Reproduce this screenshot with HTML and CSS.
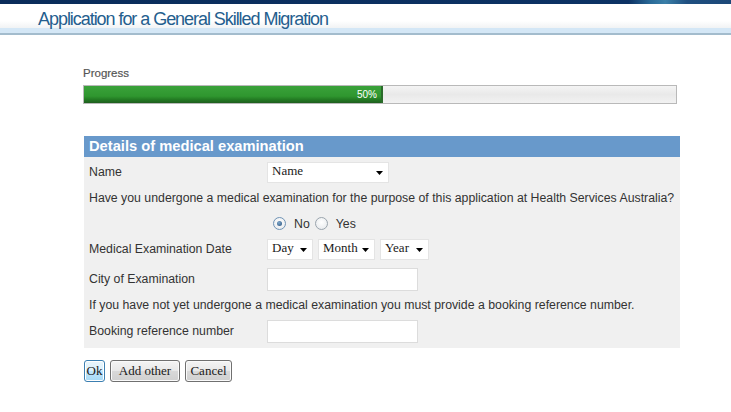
FILE: index.html
```html
<!DOCTYPE html>
<html>
<head>
<meta charset="utf-8">
<link rel="stylesheet" href="styles.css">
</head>
<body>
<div class="topbar"></div>
<div class="header">
  <h1 class="title">Application for a General Skilled Migration</h1>
</div>
<div class="band"></div>

<div class="main">
  <div class="progress-label">Progress</div>
  <div class="progress">
    <div class="progress-fill" style="width: 50.5%"><span class="progress-text">50%</span></div>
  </div>

  <div class="panel">
    <div class="panel-head">Details of medical examination</div>
    <div class="panel-body">
      <div class="row r26">
        <div class="label">Name</div>
        <div class="control">
          <div class="select w-name"><span>Name</span><svg class="arrow" width="7" height="4" viewBox="0 0 7 4"><path d="M0 0H7L3.5 4Z" fill="#000"/></svg></div>
        </div>
      </div>
      <div class="row r26">
        <div class="text">Have you undergone a medical examination for the purpose of this application at Health Services Australia?</div>
      </div>
      <div class="row r25">
        <div class="label"></div>
        <div class="control radios">
          <span class="radio checked"><span class="dot"></span></span><span class="rlabel">No</span>
          <span class="radio"></span><span class="rlabel">Yes</span>
        </div>
      </div>
      <div class="row r26">
        <div class="label">Medical Examination Date</div>
        <div class="control dates">
          <div class="select w-day"><span>Day</span><svg class="arrow" width="7" height="4" viewBox="0 0 7 4"><path d="M0 0H7L3.5 4Z" fill="#000"/></svg></div>
          <div class="select w-month"><span>Month</span><svg class="arrow" width="7" height="4" viewBox="0 0 7 4"><path d="M0 0H7L3.5 4Z" fill="#000"/></svg></div>
          <div class="select w-year"><span>Year</span><svg class="arrow" width="7" height="4" viewBox="0 0 7 4"><path d="M0 0H7L3.5 4Z" fill="#000"/></svg></div>
        </div>
      </div>
      <div class="row r34">
        <div class="label">City of Examination</div>
        <div class="control"><div class="input"></div></div>
      </div>
      <div class="row r18">
        <div class="text">If you have not yet undergone a medical examination you must provide a booking reference number.</div>
      </div>
      <div class="row r34">
        <div class="label">Booking reference number</div>
        <div class="control"><div class="input"></div></div>
      </div>
    </div>
  </div>

  <div class="buttons">
    <button class="btn btn-ok">Ok</button>
    <button class="btn btn-add">Add other</button>
    <button class="btn btn-cancel">Cancel</button>
  </div>
</div>
</body>
</html>
```

FILE: styles.css
```css
html, body {
  margin: 0;
  padding: 0;
  background: #ffffff;
  font-family: "Liberation Sans", Arial, sans-serif;
}

.topbar {
  height: 4px;
  background: linear-gradient(to right, #0a2c5a 0%, #0c3264 86%, #2a6a98 89%, #3a7fa8 91%, #1f4f80 94%, #1c4878 100%);
}

.header {
  height: 24px;
  background: linear-gradient(to bottom, #ffffff 0%, #ffffff 70%, #f1f3f4 100%);
  padding-left: 38px;
}

.title {
  margin: 0;
  font-family: "Liberation Sans", Arial, sans-serif;
  font-weight: normal;
  font-size: 18px;
  line-height: 24px;
  letter-spacing: -1.05px;
  color: #245e8e;
  padding-top: 3px;
  height: 21px;
  white-space: nowrap;
}

.band {
  height: 5px;
  background: #d4e7f6;
  border-bottom: 2px solid #a3bccd;
}

.main {
  padding-left: 83px;
  padding-top: 32px;
  width: 597px;
}

.progress-label {
  font-size: 11.5px;
  color: #555;
  line-height: 13px;
  height: 13px;
  margin-bottom: 5px;
  -webkit-text-stroke: 0.2px #555;
}

.progress {
  width: 592px;
  height: 17px;
  border: 1px solid #b9b9b9;
  background: linear-gradient(to bottom, #f4f4f4 0%, #e9e9e9 50%, #f2f2f2 100%);
  position: relative;
}

.progress-fill {
  height: 17px;
  background: linear-gradient(to bottom, #3aa23a 0%, #2f962f 60%, #237a23 80%, #1f5e1f 100%);
  border-right: 2px solid #2a6a2a;
  box-sizing: border-box;
  display: flex;
  justify-content: flex-end;
  align-items: center;
}

.progress-text {
  color: #ffffff;
  font-size: 10px;
  padding-right: 4px;
  line-height: 12px;
}

.panel {
  margin-top: 32px;
  margin-left: 1px;
  width: 596px;
}

.panel-head {
  height: 21px;
  background: #6899cb;
  color: #ffffff;
  font-weight: bold;
  font-size: 14.7px;
  line-height: 21px;
  padding-left: 5px;
}

.panel-body {
  background: #f0f0f0;
  padding-top: 2px;
  padding-left: 5px;
  padding-bottom: 0;
}

.row {
  display: flex;
  align-items: center;
  font-size: 12.3px;
  color: #333;
}

.r26 { height: 26px; }
.r25 { height: 25px; }
.r34 { height: 34px; }
.r18 { height: 18px; }

.label {
  width: 178px;
  flex: none;
}

.text {
  white-space: nowrap;
}

.control {
  display: flex;
  align-items: center;
}

.select {
  height: 21px;
  background: #ffffff;
  border: 1px solid #e4e4e4;
  box-sizing: border-box;
  display: flex;
  align-items: center;
  justify-content: space-between;
  padding: 0 5px 0 4px;
  font-family: "Liberation Serif", "Times New Roman", serif;
  font-size: 13px;
  font-weight: normal;
  color: #1a1a1a;
}

.select span {
  position: relative;
  top: -1px;
}

.arrow {
  margin-top: 2px;
}

.w-name { width: 122px; }
.w-day { width: 46px; }
.w-month { width: 57px; }
.w-year { width: 49px; }

.dates {
  gap: 5px;
}

.input {
  width: 151px;
  height: 23px;
  box-sizing: border-box;
  background: #ffffff;
  border: 1px solid #dcdcdc;
}

.radios {
  padding-left: 6px;
  color: #333;
}

.radio {
  width: 11px;
  height: 11px;
  border-radius: 50%;
  border: 1px solid #9aa4ad;
  background: radial-gradient(circle at 50% 40%, #ffffff 0%, #e3e6e9 100%);
  display: inline-flex;
  align-items: center;
  justify-content: center;
}

.radio.checked {
  border-color: #6f93b6;
}

.dot {
  width: 5px;
  height: 5px;
  border-radius: 50%;
  background: radial-gradient(circle at 40% 35%, #7fa8cc 0%, #264f7a 100%);
}

.rlabel {
  margin-left: 8px;
  margin-right: 5px;
}

.buttons {
  margin-top: 12px;
  margin-left: 1px;
  display: flex;
  gap: 5px;
  align-items: center;
}

.btn {
  height: 22px;
  padding: 0;
  font-family: "Liberation Serif", "Times New Roman", serif;
  font-size: 13px;
  font-weight: normal;
  color: #1a1a1a;
  background: linear-gradient(to bottom, #f4f4f4 0%, #e8e8e8 50%, #d9d9d9 51%, #d0d0d0 100%);
  border: 1px solid #707070;
  border-radius: 3px;
  box-shadow: inset 0 0 0 1px #fafafa;
  line-height: 18px;
}

.btn-ok {
  width: 21px;
  border-color: #3c7fb1;
  background: linear-gradient(to bottom, #eaf6fd 0%, #d9f0fc 50%, #bee6fd 51%, #a7d9f5 100%);
  box-shadow: inset 0 0 0 1px #ffffff;
}

.btn-add { width: 70px; }
.btn-cancel { width: 47px; }
```
